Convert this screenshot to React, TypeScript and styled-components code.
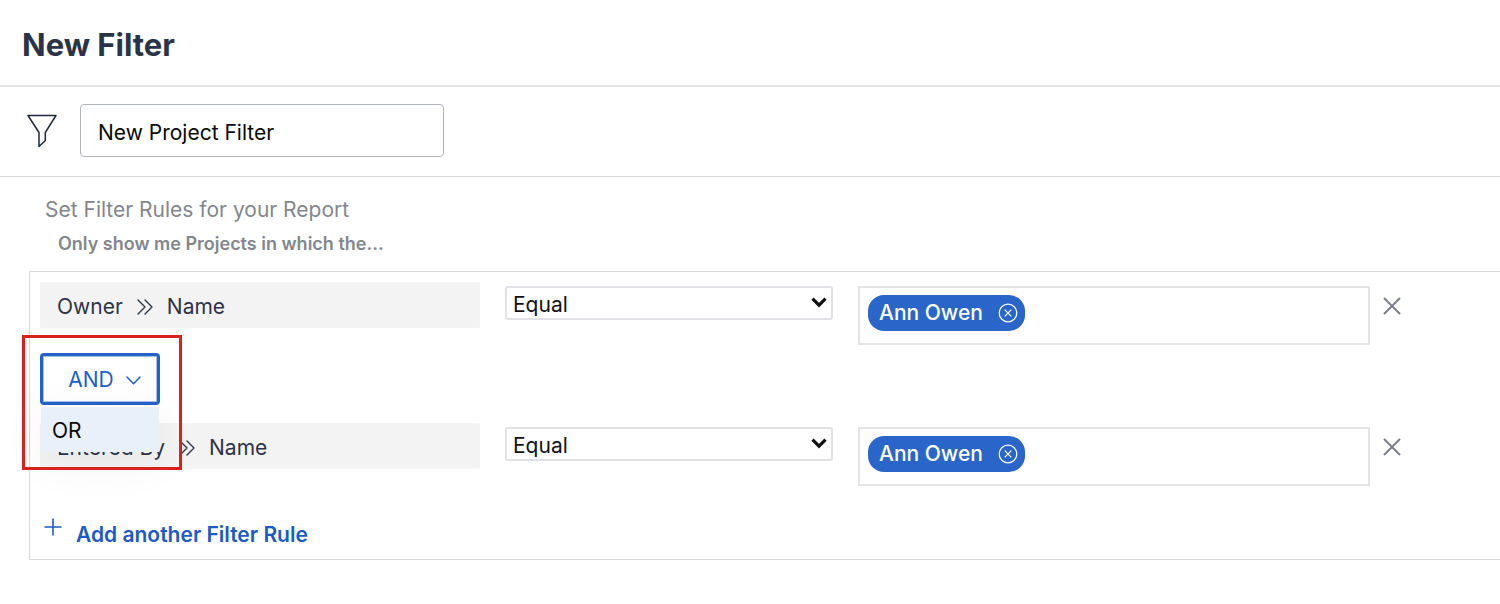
import React, { useState } from "react";
import styled, { createGlobalStyle } from "styled-components";

const GlobalStyle = createGlobalStyle`
  * { box-sizing: border-box; }
  body {
    margin: 0;
    background: #fff;
    color: #2b3447;
    font-family: Inter, "Liberation Sans", sans-serif;
    font-size: 21px;
    line-height: 28px;
    overflow-x: hidden;
  }
  button, input, select { font: inherit; color: inherit; }
`;

const Page = styled.main`
  min-width: 1100px;
`;

const Header = styled.header`
  padding: 27px 22px 22px;
  border-bottom: 2px solid #e3e4e6;
`;

const Title = styled.h1`
  margin: 0;
  font-size: 31px;
  line-height: 36px;
  font-weight: 700;
`;

const NameBar = styled.div`
  display: flex;
  align-items: center;
  gap: 23px;
  padding: 17px 27px 19px;
  border-bottom: 1px solid #d5d6d8;
`;

const NameInput = styled.input`
  width: 364px;
  height: 53px;
  padding: 4px 17px 0;
  border: 1px solid #b0b4bb;
  border-radius: 4px;
  color: #0a0a0a;
  background: #fff;
`;

const Section = styled.section`
  padding: 19px 0 0 29px;
`;

const SectionTitle = styled.h2`
  margin: 0 0 0 16px;
  font-size: 21px;
  line-height: 28px;
  font-weight: 400;
  color: #83868d;
`;

const Lead = styled.p`
  margin: 8px 0 15px 29px;
  font-size: 18px;
  line-height: 24px;
  font-weight: 600;
  color: #83868d;
`;

const RuleBox = styled.div`
  padding: 10px 99px 10px 10px;
  border: 1px solid #d6d8da;
  border-right: 0;
`;

const Rule = styled.div`
  display: flex;
  align-items: flex-start;
`;

const FieldPath = styled.div`
  display: flex;
  align-items: center;
  width: 440px;
  height: 46px;
  margin-right: 25px;
  padding: 3px 17px 0;
  gap: 14px;
  border-radius: 2px;
  background: #f3f3f3;
`;

const SelectWrap = styled.div`
  display: grid;
  align-items: center;
  width: 328px;
  margin: 4px 25px 0 0;

  > * { grid-area: 1 / 1; }
  > svg { justify-self: end; margin: 0 6px 2px 0; pointer-events: none; }
`;

const Select = styled.select`
  appearance: none;
  width: 100%;
  height: 34px;
  padding: 3px 6px 0;
  border: 2px solid #e0e1e5;
  border-radius: 3px;
  background: #fff;
  color: #111;
`;

const ValueBox = styled.div`
  flex: 1;
  height: 59px;
  margin-top: 4px;
  padding: 7px 8px;
  border: 2px solid #e3e4e5;
`;

const Chip = styled.span`
  display: inline-flex;
  align-items: center;
  gap: 15px;
  height: 36px;
  padding: 0 7px 0 11px;
  border-radius: 16px;
  background: #2a66c9;
  color: #fff;
  font-weight: 500;
`;

const IconButton = styled.button`
  display: flex;
  padding: 0;
  border: 0;
  background: none;
  cursor: pointer;
`;

const RemoveRule = styled(IconButton)`
  margin: 15px 0 0 13px;
  color: #7b7f86;
`;

const JoinRow = styled.div`
  position: relative;
  padding: 8px 0 18px;
`;

const JoinButton = styled.button`
  display: flex;
  align-items: center;
  justify-content: center;
  gap: 12px;
  width: 120px;
  height: 52px;
  padding: 2px 0 0 9px;
  border: 3px solid #2462c8;
  border-radius: 4px;
  background: #fff;
  color: #1f5fc6;
  box-shadow: inset 0 0 0 1px #a3c0ec;
`;

const JoinMenu = styled.ul`
  position: absolute;
  z-index: 1;
  top: 61px;
  left: 1px;
  width: 118px;
  margin: 0;
  padding: 1px 0 0;
  list-style: none;
  background: #f7f9fc;
  box-shadow: 0 10px 48px rgba(0, 0, 0, 0.06);
`;

const JoinOption = styled.button`
  display: block;
  width: 100%;
  height: 45px;
  padding: 2px 11px 0;
  border: 0;
  background: #e8f0fa;
  color: #0a0a0a;
  text-align: left;
`;

const Highlight = styled.div`
  position: absolute;
  z-index: 2;
  top: -10px;
  left: -18px;
  width: 160px;
  height: 135px;
  border: 3px solid #d9221a;
  pointer-events: none;
`;

const AddRule = styled.button`
  display: flex;
  align-items: flex-start;
  gap: 14px;
  margin: 31px 0 0 4px;
  padding: 0;
  border: 0;
  background: none;
  color: #1c5ac4;
  font-weight: 600;
  line-height: 28px;
  cursor: pointer;

  > span { padding-top: 4px; }
  > svg { margin-top: 1px; }
`;

const FunnelIcon = () => (
  <svg width="30" height="34" viewBox="0 0 30 34" fill="none" stroke="#1f283a" strokeWidth="1.500" strokeLinejoin="round" aria-hidden="true">
    <path d="M1 1.500h28L18.300 18.500V26.500l-6.300 6V18.500z" />
  </svg>
);

const PathIcon = () => (
  <svg width="16" height="16" viewBox="0 0 16 16" fill="none" stroke="#2b3447" strokeWidth="1.400" strokeLinecap="round" strokeLinejoin="round" aria-hidden="true">
    <path d="M1 1l7 7-7 7M8 1l7 7-7 7" />
  </svg>
);

const SelectArrow = () => (
  <svg width="16" height="11" viewBox="0 0 16 11" fill="none" stroke="#111" strokeWidth="3.200" aria-hidden="true">
    <path d="M1.500 1.700L8 8.200l6.500-6.500" />
  </svg>
);

const ChevronIcon = () => (
  <svg width="15" height="9" viewBox="0 0 15 9" fill="none" stroke="currentColor" strokeWidth="1.500" strokeLinecap="round" strokeLinejoin="round" aria-hidden="true">
    <path d="M1 1l6.500 6.800L14 1" />
  </svg>
);

const ChipRemoveIcon = () => (
  <svg width="20" height="20" viewBox="0 0 20 20" fill="none" stroke="#fff" strokeWidth="1.200" aria-hidden="true">
    <circle cx="10" cy="10" r="8.800" />
    <path d="M6.700 6.700l6.600 6.600M13.300 6.700l-6.600 6.600" />
  </svg>
);

const CrossIcon = () => (
  <svg width="18" height="18" viewBox="0 0 18 18" fill="none" stroke="currentColor" strokeWidth="2" aria-hidden="true">
    <path d="M1 1l16 16M17 1L1 17" />
  </svg>
);

const PlusIcon = () => (
  <svg width="18" height="18" viewBox="0 0 18 18" fill="none" stroke="currentColor" strokeWidth="1.600" aria-hidden="true">
    <path d="M9 0.500v17M0.500 9h17" />
  </svg>
);

const FilterRule = ({ source, field, person }: { source: string; field: string; person: string }) => (
  <Rule>
    <FieldPath>
      <span>{source}</span>
      <PathIcon />
      <span>{field}</span>
    </FieldPath>
    <SelectWrap>
      <Select aria-label={`${source} ${field} condition`} defaultValue="Equal">
        <option>Equal</option>
      </Select>
      <SelectArrow />
    </SelectWrap>
    <ValueBox>
      <Chip>
        {person}
        <IconButton type="button" aria-label={`Remove ${person}`}>
          <ChipRemoveIcon />
        </IconButton>
      </Chip>
    </ValueBox>
    <RemoveRule type="button" aria-label="Remove rule">
      <CrossIcon />
    </RemoveRule>
  </Rule>
);

export default function App() {
  const [name, setName] = useState("New Project Filter");
  return (
    <Page>
      <GlobalStyle />
      <Header>
        <Title>New Filter</Title>
      </Header>
      <NameBar>
        <FunnelIcon />
        <NameInput aria-label="Filter name" value={name} onChange={(e) => setName(e.target.value)} />
      </NameBar>
      <Section>
        <SectionTitle>Set Filter Rules for your Report</SectionTitle>
        <Lead>Only show me Projects in which the...</Lead>
        <RuleBox>
          <FilterRule source="Owner" field="Name" person="Ann Owen" />
          <JoinRow>
            <JoinButton type="button" aria-haspopup="true" aria-expanded="true">
              AND
              <ChevronIcon />
            </JoinButton>
            <JoinMenu>
              <li>
                <JoinOption type="button">OR</JoinOption>
              </li>
            </JoinMenu>
            <Highlight />
          </JoinRow>
          <FilterRule source="Entered By" field="Name" person="Ann Owen" />
          <AddRule type="button">
            <PlusIcon />
            <span>Add another Filter Rule</span>
          </AddRule>
        </RuleBox>
      </Section>
    </Page>
  );
}
